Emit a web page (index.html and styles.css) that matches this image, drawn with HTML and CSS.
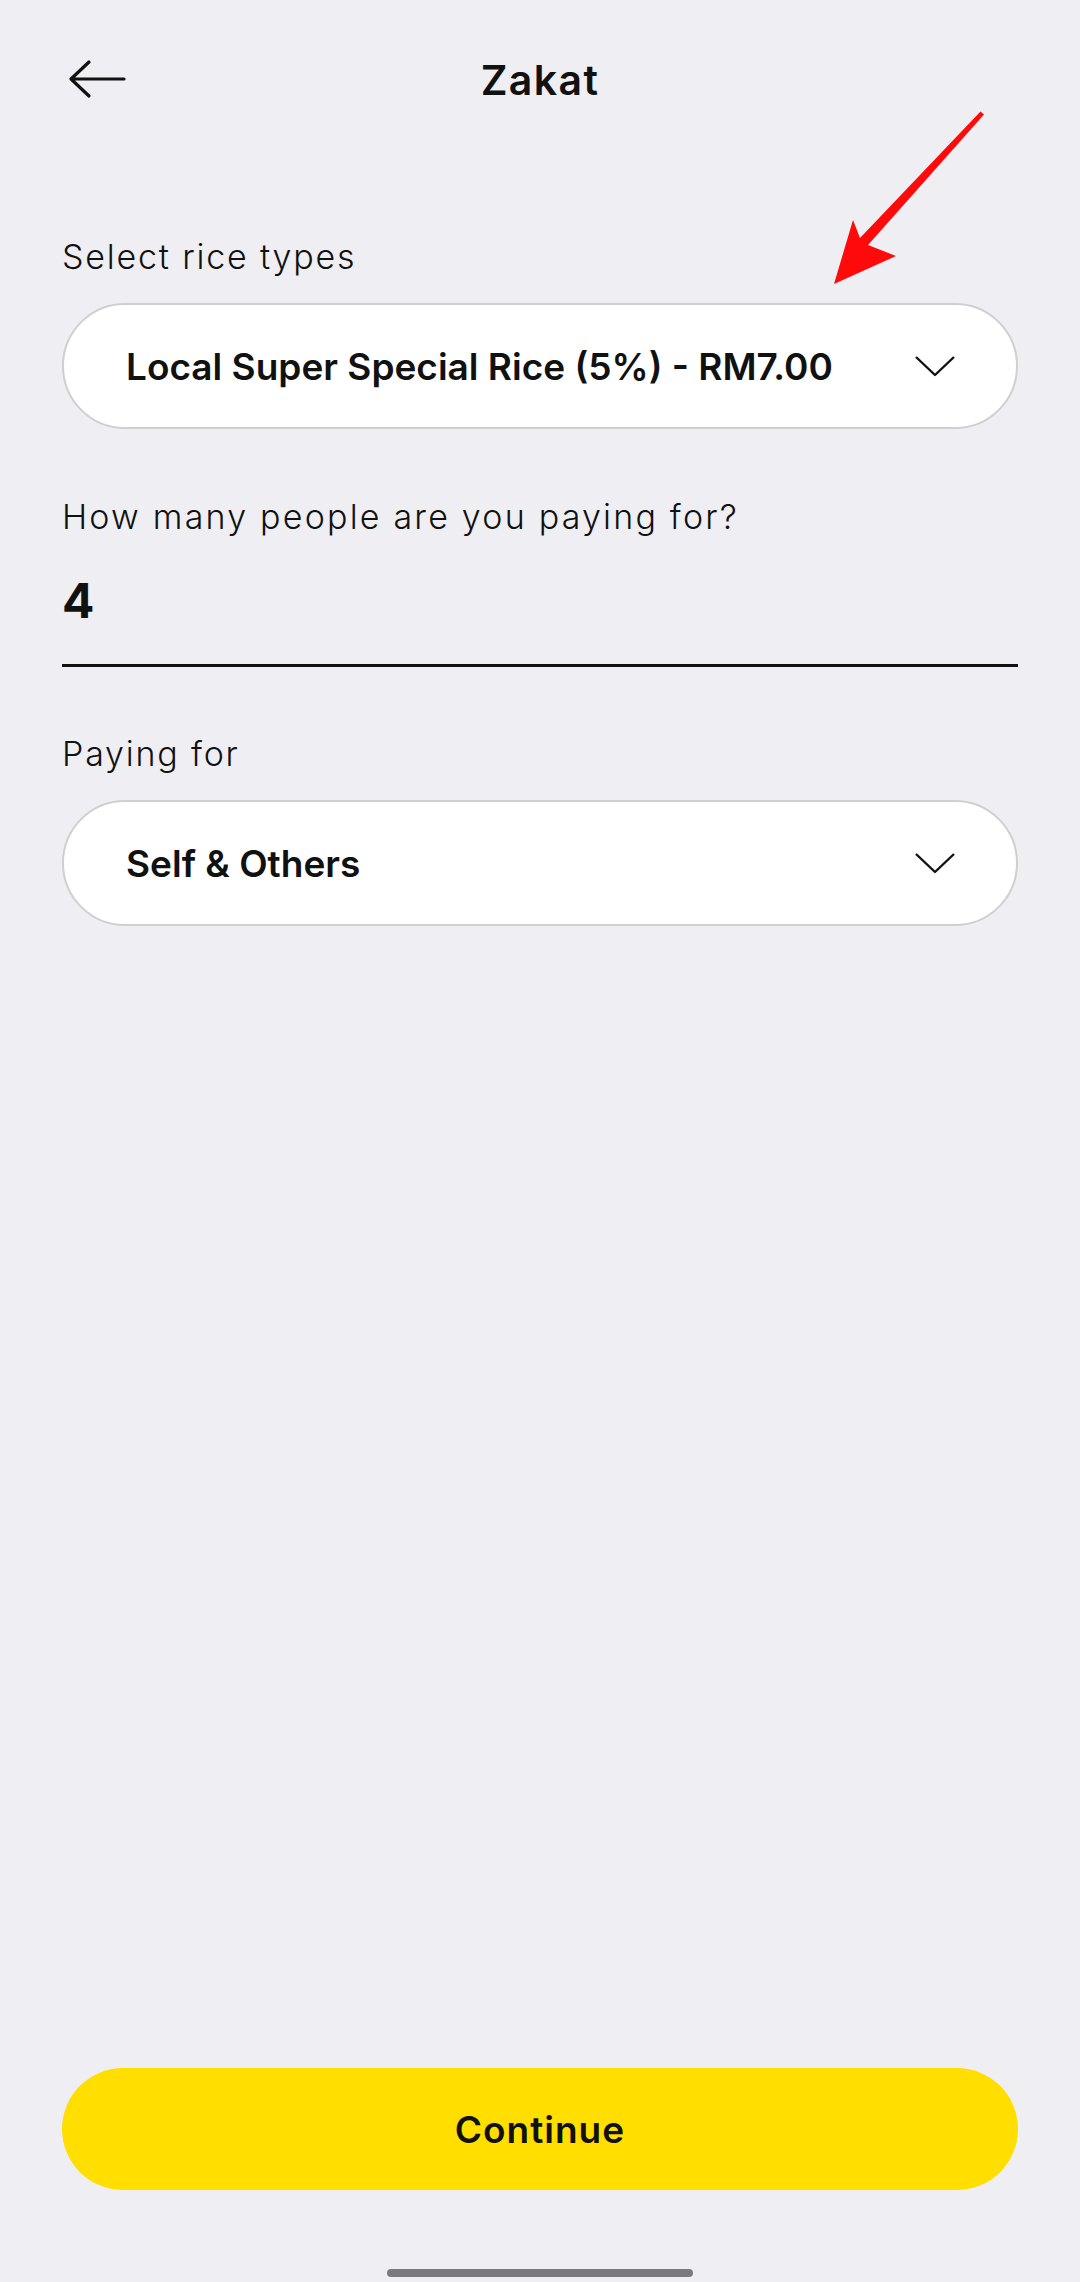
FILE: index.html
```html
<!DOCTYPE html>
<html lang="en">
<head>
<meta charset="UTF-8">
<meta name="viewport" content="width=device-width, initial-scale=1.0">
<title>Zakat</title>
<link rel="stylesheet" href="styles.css">
</head>
<body>
  <div class="screen">
    <header class="topbar">
      <button class="back" aria-label="Back">
        <svg width="60" height="40" viewBox="0 0 60 40">
          <path d="M4 20 H57 M22 3 L4 20 L22 37" fill="none" stroke="#111" stroke-width="3.2" stroke-linecap="round" stroke-linejoin="round"/>
        </svg>
      </button>
      <h1 class="title">Zakat</h1>
    </header>

    <main class="form">
      <div class="field">
        <label class="label">Select rice types</label>
        <div class="select">
          <span class="select-value">Local Super Special Rice (5%) - RM7.00</span>
          <svg class="chev" width="42" height="24" viewBox="0 0 42 24">
            <path d="M2 3 L21 21 L40 3" fill="none" stroke="#111" stroke-width="2.4" stroke-linejoin="round"/>
          </svg>
        </div>
      </div>

      <div class="field field-count">
        <label class="label label-wide">How many people are you paying for?</label>
        <div class="count">4</div>
      </div>

      <div class="field field-paying">
        <label class="label">Paying for</label>
        <div class="select">
          <span class="select-value">Self &amp; Others</span>
          <svg class="chev" width="42" height="24" viewBox="0 0 42 24">
            <path d="M2 3 L21 21 L40 3" fill="none" stroke="#111" stroke-width="2.4" stroke-linejoin="round"/>
          </svg>
        </div>
      </div>
    </main>

    <footer class="bottom">
      <button class="continue">Continue</button>
      <div class="home-bar"></div>
    </footer>

    <!-- annotation arrow drawn over the screenshot -->
    <svg class="pointer" width="1080" height="320" viewBox="0 0 1080 320">
      <polygon fill="#ff0a0a" points="980.5,111.5 984,114.5 868,245 896,256 834,284 853,220 860,238"/>
    </svg>
  </div>
</body>
</html>
```

FILE: styles.css
```css
/* Zakat screen */
body {
  margin: 0;
  background-color: #efeef3;
  font-family: Inter, "Noto Sans", sans-serif;
  color: #111;
}
.screen {
  position: relative;
  width: 1080px;
  height: 2282px;
  display: flex;
  flex-direction: column;
}
.topbar {
  position: relative;
  height: 160px;
  display: flex;
  align-items: center;
  justify-content: center;
}
.back {
  position: absolute;
  left: 67px;
  top: 59px;
  padding: 0;
  border: none;
  background: none;
  line-height: 0;
}
.title {
  margin: 0;
  font-size: 41px;
  font-weight: 600;
  letter-spacing: 1.4px;
}
.form {
  flex: 1;
  padding: 77px 62px 0;
  display: flex;
  flex-direction: column;
}
.field-count {
  margin-top: 68px;
}
.field-paying {
  margin-top: 67px;
}
.label {
  display: block;
  font-size: 34px;
  font-weight: 300;
  line-height: 40px;
  letter-spacing: 1.8px;
}
.label-wide {
  letter-spacing: 2.2px;
}
.select {
  margin-top: 26px;
  height: 126px;
  box-sizing: border-box;
  border: 2px solid #cfcfd2;
  border-radius: 63px;
  background: #fff;
  display: flex;
  align-items: center;
  justify-content: space-between;
  padding: 0 60px 0 62px;
}
.select-value {
  font-size: 37px;
  font-weight: 600;
}
.chev {
  display: block;
}
.count {
  margin-top: 36px;
  padding-bottom: 35px;
  border-bottom: 3px solid #111;
  font-size: 48px;
  font-weight: 700;
  line-height: 56px;
}
.bottom {
  display: flex;
  flex-direction: column;
  align-items: center;
  padding: 0 62px;
}
.continue {
  width: 100%;
  height: 122px;
  border: none;
  border-radius: 61px;
  background-color: #ffde00;
  color: #111;
  font-family: Inter, "Noto Sans", sans-serif;
  font-size: 37px;
  font-weight: 600;
  letter-spacing: 1px;
}
.home-bar {
  margin-top: 79px;
  margin-bottom: 5px;
  width: 306px;
  height: 8px;
  border-radius: 4px;
  background-color: #7a7a7e;
}
.pointer {
  position: absolute;
  top: 0;
  left: 0;
  pointer-events: none;
}
```
